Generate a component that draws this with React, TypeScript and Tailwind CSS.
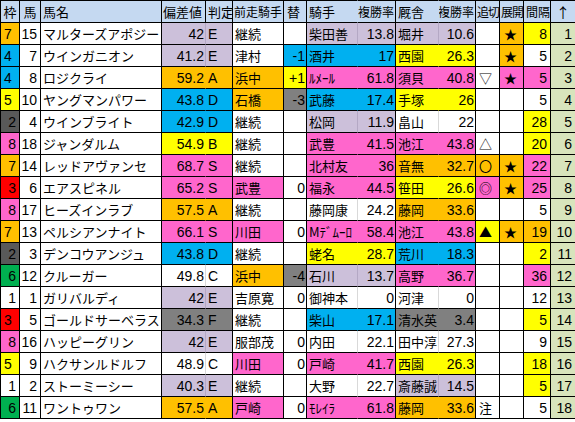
import clsx from "clsx";

// Race table: horse index, jockey/stable rates and marks
type Row = [
  number, number, number, string,
  string, string, string,
  string, string, string, string,
  string, string, string,
  string, string, string,
  string, string, string, string,
  string, string,
];

const BG: Record<string, string> = {
  W: "bg-white",
  O: "bg-[#ffc000]",
  B: "bg-[#00b0f0]",
  Y: "bg-[#ffff00]",
  P: "bg-[#ff66cc]",
  L: "bg-[#ccc0da]",
  G: "bg-[#808080]",
};

// light divider inside a paired cell (value + grade, name + rate)
const SEP: Record<string, string> = {
  W: "border-r-[#d9d9d9]",
  L: "border-r-[#b4a8c4]",
  O: "border-r-transparent",
  B: "border-r-transparent",
  Y: "border-r-transparent",
  P: "border-r-transparent",
  G: "border-r-transparent",
};

const WAKU: Record<number, string> = {
  1: "bg-white",
  2: "bg-[#595959]",
  3: "bg-[#ff0000]",
  4: "bg-[#00b0f0]",
  5: "bg-[#ffff00]",
  6: "bg-[#00b050]",
  7: "bg-[#ffc000]",
  8: "bg-[#ff66cc]",
};

const rows: Row[] = [
  [7, 1, 15, "マルターズアポジー", "42", "E", "L", "継続", "W", "", "W", "柴田善", "13.8", "L", "堀井", "10.6", "L", "", "W", "★", "O", "8", "Y"],
  [4, 1, 7, "ウインガニオン", "41.2", "E", "L", "津村", "W", "-1", "B", "酒井", "17", "B", "西園", "26.3", "Y", "", "W", "★", "O", "5", "W"],
  [4, 1, 8, "ロジクライ", "59.2", "A", "O", "浜中", "O", "+1", "Y", "ﾙﾒｰﾙ", "61.8", "P", "須貝", "40.8", "P", "▽", "W", "★", "P", "5", "P"],
  [5, 1, 10, "ヤングマンパワー", "43.8", "D", "B", "石橋", "O", "-3", "G", "武藤", "17.4", "B", "手塚", "26", "Y", "", "W", "", "W", "5", "W"],
  [2, 0, 4, "ウインブライト", "42.9", "D", "B", "継続", "W", "", "W", "松岡", "11.9", "L", "畠山", "22", "W", "", "W", "", "W", "28", "Y"],
  [8, 0, 18, "ジャンダルム", "54.9", "B", "Y", "継続", "W", "", "W", "武豊", "41.5", "P", "池江", "43.8", "P", "△", "W", "", "W", "20", "Y"],
  [7, 0, 14, "レッドアヴァンセ", "68.7", "S", "P", "継続", "W", "", "W", "北村友", "36", "P", "音無", "32.7", "O", "〇", "O", "★", "O", "22", "P"],
  [3, 0, 6, "エアスピネル", "65.2", "S", "P", "武豊", "P", "0", "W", "福永", "44.5", "P", "笹田", "26.6", "Y", "◎", "P", "★", "O", "25", "P"],
  [8, 0, 17, "ヒーズインラブ", "57.5", "A", "O", "継続", "W", "", "W", "藤岡康", "24.2", "W", "藤岡", "33.6", "O", "", "W", "", "W", "5", "W"],
  [7, 1, 13, "ペルシアンナイト", "66.1", "S", "P", "川田", "P", "0", "W", "Mﾃﾞﾑｰﾛ", "58.4", "P", "池江", "43.8", "P", "▲", "Y", "★", "O", "19", "O"],
  [2, 0, 3, "デンコウアンジュ", "43.8", "D", "B", "継続", "W", "", "W", "蛯名", "28.7", "Y", "荒川", "18.3", "B", "", "W", "", "W", "2", "Y"],
  [6, 0, 12, "クルーガー", "49.8", "C", "W", "浜中", "O", "-4", "G", "石川", "13.7", "L", "高野", "36.7", "P", "", "W", "", "W", "36", "P"],
  [1, 0, 1, "ガリバルディ", "42", "E", "L", "吉原寛", "W", "0", "W", "御神本", "0", "W", "河津", "0", "W", "", "W", "", "W", "12", "W"],
  [3, 1, 5, "ゴールドサーベラス", "34.3", "F", "G", "継続", "W", "", "W", "柴山", "17.1", "B", "清水英", "3.4", "G", "", "W", "", "W", "5", "Y"],
  [8, 0, 16, "ハッピーグリン", "42", "E", "L", "服部茂", "W", "0", "W", "内田", "22.1", "W", "田中淳", "27.3", "W", "", "W", "", "W", "9", "W"],
  [5, 1, 9, "ハクサンルドルフ", "48.9", "C", "W", "川田", "P", "0", "W", "戸崎", "41.7", "P", "西園", "26.3", "Y", "", "W", "", "W", "18", "Y"],
  [1, 0, 2, "ストーミーシー", "40.3", "E", "L", "継続", "W", "", "W", "大野", "22.7", "W", "斎藤誠", "14.5", "L", "", "W", "", "W", "5", "Y"],
  [6, 0, 11, "ワントゥワン", "57.5", "A", "O", "戸崎", "P", "0", "W", "ﾓﾚｲﾗ", "61.8", "P", "藤岡", "33.6", "O", "注", "W", "", "W", "5", "W"],
];

const JP = "font-['Noto_Sans_CJK_JP',sans-serif] text-[13px]";

function Cell({ className, children }: { className?: string; children?: React.ReactNode }) {
  return (
    <div className={clsx("flex items-center overflow-hidden whitespace-nowrap leading-none border-b border-b-black border-r", className)}>
      {children}
    </div>
  );
}

function Head({ className, children }: { className?: string; children?: React.ReactNode }) {
  return (
    <Cell className={clsx("bg-[#c5d9f1] border-t border-t-black", JP, className)}>{children}</Cell>
  );
}

export default function App() {
  return (
    <div className="w-[575px] h-[422px] overflow-hidden bg-white text-black font-['Liberation_Sans','Noto_Sans_CJK_JP',sans-serif] text-[14px]">
      <div className="grid w-[575px] grid-cols-[20px_21px_121px_44px_27px_51px_23px_51px_38px_43px_37px_24px_24px_27px_24px] grid-rows-[23px_repeat(18,22px)]">
        <Head className="border-l border-l-black border-r-black justify-center">枠</Head>
        <Head className="border-r-black justify-center">馬</Head>
        <Head className="border-r-black pl-[2px]">馬名</Head>
        <Head className="border-r-black pl-[1px]">偏差値</Head>
        <Head className="border-r-black pl-[2px]">判定</Head>
        <Head className="border-r-black pl-[1px] !text-[12px]">前走騎手</Head>
        <Head className="border-r-black pl-[3px]">替</Head>
        <Head className="border-r-transparent pl-[2px]">騎手</Head>
        <Head className="border-r-black justify-end pr-[1px] !text-[12px]">複勝率</Head>
        <Head className="border-r-transparent pl-[2px]">厩舎</Head>
        <Head className="border-r-black justify-end pr-[1px] !text-[12px]">複勝率</Head>
        <Head className="border-r-black pl-[1px] !text-[12px] tracking-[-1px]">追切</Head>
        <Head className="border-r-black pl-[1px] !text-[12px] tracking-[-1px]">展開</Head>
        <Head className="border-r-black pl-[2px] !text-[12px]">間隔</Head>
        <Head className="border-r-0 pl-[5px] !text-[14px]">↑</Head>

        {rows.map((r, i) => {
          const [w, left, u, name, hv, hj, hc, zen, zc, kae, kc, jn, jr, jc, st, sr, sc, oi, oc, te, tc, iv, ic] = r;
          return [
            <Cell key={`${i}a`} className={clsx(WAKU[w], "border-l border-l-black border-r-black", left ? "pl-[3px]" : "justify-end pr-[3px]")}>{w}</Cell>,
            <Cell key={`${i}b`} className="bg-white border-r-black justify-end pr-[3px]">{u}</Cell>,
            <Cell key={`${i}c`} className={clsx("bg-white border-r-black pl-[2px]", JP)}>{name}</Cell>,
            <Cell key={`${i}d`} className={clsx(BG[hc], SEP[hc], "justify-end pr-[1px]")}>{hv}</Cell>,
            <Cell key={`${i}e`} className={clsx(BG[hc], "border-r-black pl-[2px]")}>{hj}</Cell>,
            <Cell key={`${i}f`} className={clsx(BG[zc], "border-r-black pl-[2px]", JP)}>{zen}</Cell>,
            <Cell key={`${i}g`} className={clsx(BG[kc], "border-r-black justify-end pr-[1px]")}>{kae}</Cell>,
            <Cell key={`${i}h`} className={clsx(BG[jc], SEP[jc], "pl-[2px]", JP)}>{jn}</Cell>,
            <Cell key={`${i}i`} className={clsx(BG[jc], "border-r-black justify-end pr-[1px]")}>{jr}</Cell>,
            <Cell key={`${i}j`} className={clsx(BG[sc], SEP[sc], "pl-[2px]", JP)}>{st}</Cell>,
            <Cell key={`${i}k`} className={clsx(BG[sc], "border-r-black justify-end pr-[1px]")}>{sr}</Cell>,
            <Cell key={`${i}l`} className={clsx(BG[oc], "border-r-black pl-[3px]", JP)}>{oi}</Cell>,
            <Cell key={`${i}m`} className={clsx(BG[tc], "border-r-black pl-[4px]", JP)}>{te}</Cell>,
            <Cell key={`${i}n`} className={clsx(BG[ic], "border-r-black justify-end pr-[3px]")}>{iv}</Cell>,
            <Cell key={`${i}o`} className="bg-[#d8e4bc] border-r-0 justify-end pr-[3px]">{i + 1}</Cell>,
          ];
        })}
      </div>
    </div>
  );
}
